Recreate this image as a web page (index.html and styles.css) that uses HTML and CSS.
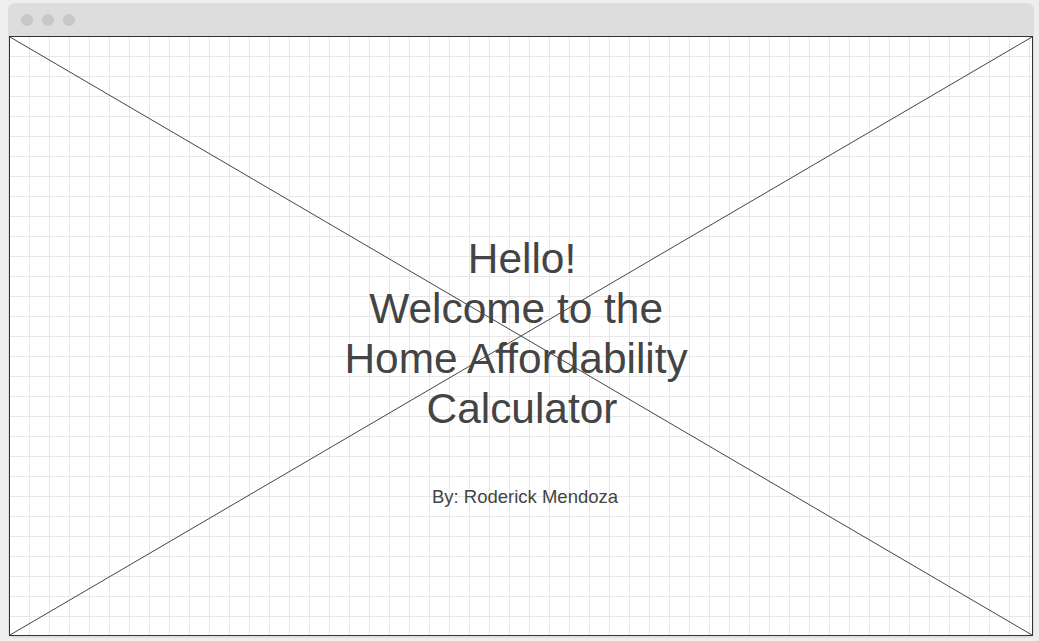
FILE: index.html
```html
<!DOCTYPE html>
<html lang="en">
<head>
<meta charset="utf-8">
<title>Home Affordability Calculator</title>
<link rel="stylesheet" href="styles.css">
</head>
<body>
  <div class="window">
    <div class="titlebar">
      <span class="dot"></span>
      <span class="dot"></span>
      <span class="dot"></span>
    </div>
    <div class="canvas">
      <svg class="cross" viewBox="0 0 100 100" preserveAspectRatio="none" aria-hidden="true">
        <line x1="0" y1="0" x2="100" y2="100" vector-effect="non-scaling-stroke"></line>
        <line x1="0" y1="100" x2="100" y2="0" vector-effect="non-scaling-stroke"></line>
      </svg>
      <div class="content">
        <h1 class="title">Hello!<br>Welcome to the&nbsp;<br>Home Affordability&nbsp;<br>Calculator</h1>
        <p class="byline">By: Roderick Mendoza</p>
      </div>
    </div>
  </div>
</body>
</html>
```

FILE: styles.css
```css
html, body {
  margin: 0;
  padding: 0;
}

body {
  background: #eeeeee;
  font-family: "Liberation Sans", Arial, sans-serif;
  width: 1039px;
  height: 641px;
  overflow: hidden;
}

.window {
  margin: 3px 0 0 8px;
  width: 1026px;
  height: 635px;
  background: #dddddd;
  border-radius: 6px;
  padding: 0 1px 2px 1px;
  box-sizing: border-box;
  display: flex;
  flex-direction: column;
}

.titlebar {
  height: 33px;
  display: flex;
  align-items: center;
  gap: 9px;
  padding-left: 12px;
  flex: none;
}

.dot {
  width: 12px;
  height: 12px;
  border-radius: 50%;
  background: #c8c8c8;
}

.canvas {
  position: relative;
  flex: 1;
  border: 1px solid #333333;
  background-color: #ffffff;
  background-image:
    linear-gradient(to right, transparent 19px, #e8e8e8 19px),
    linear-gradient(to bottom, transparent 19px, #e8e8e8 19px);
  background-size: 20px 20px;
  overflow: hidden;
}

.cross {
  position: absolute;
  inset: 0;
  width: 100%;
  height: 100%;
}

.cross line {
  stroke: #444444;
  stroke-width: 1;
}

.content {
  position: relative;
  display: flex;
  flex-direction: column;
  align-items: center;
  padding-top: 197px;
  color: #444444;
}

.title {
  margin: 0 0 0 2px;
  font-size: 42.4px;
  line-height: 50px;
  font-weight: normal;
  text-align: center;
}

.byline {
  margin: 52px 0 0 8px;
  font-size: 18.5px;
  line-height: 22px;
}
```
